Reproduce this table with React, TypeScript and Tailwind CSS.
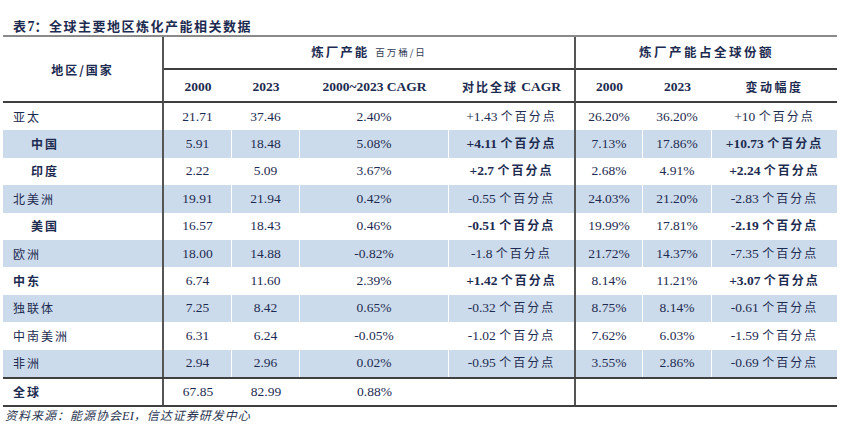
import React from "react";

type Row = {
  name: string;
  indent?: boolean;
  bold?: boolean;
  blue?: boolean;
  v: string[];
};

const rows: Row[] = [
  { name: "亚太", v: ["21.71", "37.46", "2.40%", "+1.43", "26.20%", "36.20%", "+10"] },
  { name: "中国", indent: true, bold: true, blue: true, v: ["5.91", "18.48", "5.08%", "+4.11", "7.13%", "17.86%", "+10.73"] },
  { name: "印度", indent: true, bold: true, v: ["2.22", "5.09", "3.67%", "+2.7", "2.68%", "4.91%", "+2.24"] },
  { name: "北美洲", blue: true, v: ["19.91", "21.94", "0.42%", "-0.55", "24.03%", "21.20%", "-2.83"] },
  { name: "美国", indent: true, bold: true, v: ["16.57", "18.43", "0.46%", "-0.51", "19.99%", "17.81%", "-2.19"] },
  { name: "欧洲", blue: true, v: ["18.00", "14.88", "-0.82%", "-1.8", "21.72%", "14.37%", "-7.35"] },
  { name: "中东", bold: true, v: ["6.74", "11.60", "2.39%", "+1.42", "8.14%", "11.21%", "+3.07"] },
  { name: "独联体", blue: true, v: ["7.25", "8.42", "0.65%", "-0.32", "8.75%", "8.14%", "-0.61"] },
  { name: "中南美洲", v: ["6.31", "6.24", "-0.05%", "-1.02", "7.62%", "6.03%", "-1.59"] },
  { name: "非洲", blue: true, v: ["2.94", "2.96", "0.02%", "-0.95", "3.55%", "2.86%", "-0.69"] },
];

const serif = "font-['Liberation_Serif','Noto_Sans_CJK_SC',serif]";
const cjk = "font-['Noto_Sans_CJK_SC',sans-serif]";

// column separators: white hairline inside blue bands, dark rule after col 0 and col 4
const sep = [
  "border-r-2 border-[#555]",
  "border-r border-white",
  "border-r border-white",
  "border-r border-white",
  "border-r-2 border-[#555]",
  "border-r border-white",
  "border-r border-white",
  "",
];

function Pts({ n, bold }: { n: string; bold?: boolean }) {
  return (
    <span className={bold ? "font-bold" : ""}>
      <span className={`${serif} text-[13.5px]`}>{n} </span>
      <span className={`${cjk} text-[12px] tracking-[2px]`}>个百分点</span>
    </span>
  );
}

export default function App() {
  return (
    <div className="w-[844px] h-[424px] bg-white text-[#1d2b50]">
      <div className={`h-[35px] pt-[18px] pl-[13px] leading-4 text-[13px] font-bold tracking-[1.5px] ${cjk}`}>
        表<span className={`${serif} text-[14px] tracking-normal`}>7</span>：全球主要地区炼化产能相关数据
      </div>
      <div className="ml-[3px] w-[834px] border-t-2 border-b-2 border-t-[#8a8a8a] border-b-[#3f3f3f]">
        <div className="grid grid-cols-[161px_68px_68px_149px_127px_67px_69px_125px] grid-rows-[33px_33px]">
          <div className={`row-span-2 flex items-center justify-center border-r-2 border-b-2 border-r-[#555] border-b-[#3f3f3f] pt-[2px] ${cjk} text-[12px] font-bold tracking-[2px]`}>
            地区/国家
          </div>
          <div className={`col-span-4 flex items-center justify-center border-b-2 border-r-2 border-b-[#3f3f3f] border-r-[#555] ${cjk}`}>
            <span className="text-[12.5px] font-bold tracking-[2px]">炼厂产能</span>
            <span className="ml-[6px] text-[9.5px] tracking-[2px] text-[#333c55]">百万桶/日</span>
          </div>
          <div className={`col-span-3 flex items-center justify-center border-b-2 border-b-[#3f3f3f] ${cjk} text-[12.5px] font-bold tracking-[2.5px]`}>
            炼厂产能占全球份额
          </div>
          {["2000", "2023", "2000~2023 CAGR", "对比全球 CAGR", "2000", "2023", "变动幅度"].map((h, i) => (
            <div
              key={i}
              className={`flex items-center justify-center pt-[3px] border-b-2 border-b-[#3f3f3f] ${i === 3 ? "border-r-2 border-r-[#555]" : ""} font-bold ${serif} text-[13.5px]`}
            >
              {h === "对比全球 CAGR" ? (
                <>
                  <span className={`${cjk} text-[12px] tracking-[2px]`}>对比全球</span>
                  <span>&nbsp;CAGR</span>
                </>
              ) : h === "变动幅度" ? (
                <span className={`${cjk} text-[12px] tracking-[2.5px]`}>变动幅度</span>
              ) : (
                h
              )}
            </div>
          ))}
        </div>

        {rows.map((r) => (
          <div key={r.name} className="grid grid-cols-[161px_68px_68px_149px_127px_67px_69px_125px] h-[27.4px]">
            <div
              className={`${sep[0]} flex items-center ${r.indent ? "pl-[28px]" : "pl-[10px]"} ${r.blue ? "bg-[#ccdbeb]" : ""} ${cjk} text-[12px] tracking-[2px] ${r.bold ? "font-bold" : ""}`}
            >
              {r.name}
            </div>
            {r.v.map((val, i) => {
              const col = i + 1;
              const isPts = col === 4 || col === 7;
              return (
                <div
                  key={i}
                  className={`${sep[col]} flex items-center justify-center ${r.blue ? "bg-[#ccdbeb]" : ""} ${serif} text-[13.5px]`}
                >
                  {isPts ? <Pts n={val} bold={r.bold} /> : val}
                </div>
              );
            })}
          </div>
        ))}

        <div className="grid grid-cols-[161px_68px_68px_149px_127px_67px_69px_125px] h-[28px] border-t-2 border-[#3f3f3f]">
          <div className={`${sep[0]} flex items-center pl-[10px] ${cjk} text-[12px] tracking-[2px] font-bold`}>全球</div>
          {["67.85", "82.99", "0.88%", "", "", "", ""].map((val, i) => (
            <div key={i} className={`${i + 1 === 4 ? sep[4] : ""} flex items-center justify-center ${serif} text-[13.5px]`}>
              {val}
            </div>
          ))}
        </div>
      </div>
      <div className={`pl-[5px] pt-[1px] leading-[14px] italic text-[12px] tracking-[1px] text-[#2a3550] ${cjk}`}>
        资料来源：能源协会<span className={`${serif} text-[12.5px] tracking-normal`}>EI</span>，信达证券研发中心
      </div>
    </div>
  );
}
